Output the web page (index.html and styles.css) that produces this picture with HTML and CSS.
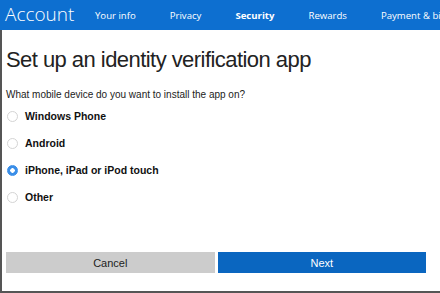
FILE: index.html
```html
<!DOCTYPE html>
<html lang="en">
<head>
  <meta charset="UTF-8" />
  <meta name="viewport" content="width=device-width, initial-scale=1.0"/>
  <title>Set up an identity verification app</title>
  <link rel="stylesheet" href="styles.css">
</head>
<body>
  <header class="topbar">
    <span class="brand">Account</span>
    <nav class="nav">
      <a href="#">Your info</a>
      <a href="#">Privacy</a>
      <a href="#" class="active">Security</a>
      <a href="#">Rewards</a>
      <a href="#">Payment &amp; billing</a>
    </nav>
  </header>

  <main class="page">
    <h1>Set up an identity verification app</h1>
    <p class="question">What mobile device do you want to install the app on?</p>

    <div class="options">
      <label class="option"><span class="radio"></span>Windows Phone</label>
      <label class="option"><span class="radio"></span>Android</label>
      <label class="option"><span class="radio checked"></span>iPhone, iPad or iPod touch</label>
      <label class="option"><span class="radio"></span>Other</label>
    </div>

    <div class="actions">
      <button class="btn cancel">Cancel</button>
      <button class="btn next">Next</button>
    </div>
  </main>
</body>
</html>
```

FILE: styles.css
```css
body {
  margin: 0;
  width: 440px;
  height: 293px;
  overflow: hidden;
  background: #fff;
  font-family: "Liberation Sans", Arial, sans-serif;
}

.topbar {
  display: flex;
  align-items: center;
  height: 30px;
  background: #0d6fd0;
  color: #fff;
  white-space: nowrap;
  overflow: hidden;
}

.brand {
  font-family: "Open Sans", sans-serif;
  font-weight: 300;
  font-size: 19px;
  padding-left: 5px;
  width: 90px;
  flex-shrink: 0;
  margin-top: -2px;
}

.nav {
  display: flex;
  gap: 34px;
}

.nav a {
  color: #fff;
  text-decoration: none;
  font-family: "Open Sans", sans-serif;
  font-size: 9.6px;
}

.nav a.active {
  font-weight: 700;
}

.page {
  height: 261px;
  border-left: 2px solid #555;
  border-bottom: 2px solid #555;
  padding: 0 14px 0 4px;
  display: flex;
  flex-direction: column;
}

h1 {
  font-weight: 400;
  font-size: 22px;
  letter-spacing: -0.55px;
  color: #222;
  margin: 17px 0 0 0;
}

.question {
  font-size: 10px;
  color: #222;
  margin: 16px 0 0 0;
}

.options {
  display: flex;
  flex-direction: column;
  gap: 13px;
  margin-top: 9px;
}

.option {
  display: flex;
  align-items: center;
  gap: 7px;
  font-size: 10.5px;
  font-weight: 700;
  color: #111;
  height: 14px;
}

.radio {
  width: 9px;
  height: 9px;
  border: 1px solid #d4d4d4;
  border-radius: 50%;
  background: #fff;
  margin-left: 1px;
}

.radio.checked {
  border-color: #3a8ee8;
  background: radial-gradient(circle, #fff 0 2px, #3a8ee8 2.5px);
}

.actions {
  display: flex;
  gap: 3px;
  margin-top: auto;
  margin-bottom: 18px;
}

.btn {
  flex: 1;
  height: 21px;
  border: 0;
  font-family: "Liberation Sans", Arial, sans-serif;
  font-size: 11px;
}

.cancel {
  background: #cccccc;
  color: #222;
}

.next {
  background: #0a66c0;
  color: #fff;
}
```
